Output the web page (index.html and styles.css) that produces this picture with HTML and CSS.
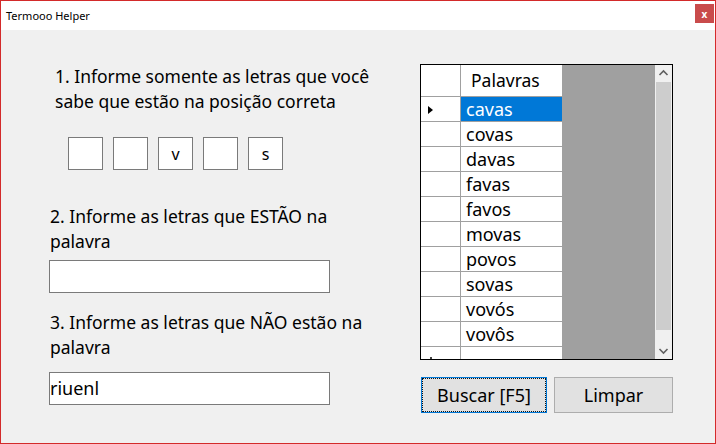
FILE: index.html
```html
<!DOCTYPE html>
<html lang="pt">
<head>
<meta charset="utf-8">
<title>Termooo Helper</title>
<link rel="stylesheet" href="styles.css">
</head>
<body>
<div class="window">
  <div class="titlebar">
    <span class="title">Termooo Helper</span>
    <span class="close">x</span>
  </div>
  <div class="content">
    <div class="left">
      <p class="label label1">1. Informe somente as letras que você<br>sabe que estão na posição correta</p>
      <div class="boxes">
        <div class="box"></div>
        <div class="box"></div>
        <div class="box">v</div>
        <div class="box"></div>
        <div class="box">s</div>
      </div>
      <p class="label label2">2. Informe as letras que ESTÃO na<br>palavra</p>
      <div class="input"></div>
      <p class="label label3">3. Informe as letras que NÃO estão na<br>palavra</p>
      <div class="input input2">riuenl</div>
    </div>
    <div class="right">
      <div class="grid">
        <div class="table">
          <div class="row head"><div class="rh"></div><div class="cell">Palavras</div></div>
          <div class="row sel"><div class="rh"><span class="arrow"></span></div><div class="cell">cavas</div></div>
          <div class="row"><div class="rh"></div><div class="cell">covas</div></div>
          <div class="row"><div class="rh"></div><div class="cell">davas</div></div>
          <div class="row"><div class="rh"></div><div class="cell">favas</div></div>
          <div class="row"><div class="rh"></div><div class="cell">favos</div></div>
          <div class="row"><div class="rh"></div><div class="cell">movas</div></div>
          <div class="row"><div class="rh"></div><div class="cell">povos</div></div>
          <div class="row"><div class="rh"></div><div class="cell">sovas</div></div>
          <div class="row"><div class="rh"></div><div class="cell">vovós</div></div>
          <div class="row"><div class="rh"></div><div class="cell">vovôs</div></div>
          <div class="row newrow"><div class="rh"><span class="dot"></span></div><div class="cell"></div></div>
        </div>
        <div class="fill"></div>
        <div class="scroll">
          <svg class="chev" width="17" height="17" viewBox="0 0 17 17"><path d="M4.5 10 L8.5 6 L12.5 10" fill="none" stroke="#606060" stroke-width="1.6"/></svg>
          <div class="track"><div class="thumb"></div></div>
          <svg class="chev" width="17" height="17" viewBox="0 0 17 17"><path d="M4.5 7 L8.5 11 L12.5 7" fill="none" stroke="#606060" stroke-width="1.6"/></svg>
        </div>
      </div>
      <div class="buttons">
        <button class="btn btn-primary">Buscar [F5]</button>
        <button class="btn btn-clear">Limpar</button>
      </div>
    </div>
  </div>
</div>
</body>
</html>
```

FILE: styles.css
```css
* { box-sizing: border-box; }
html, body { margin: 0; padding: 0; }
body {
  width: 716px;
  height: 444px;
  overflow: hidden;
  font-family: "Noto Sans", "Open Sans", sans-serif;
  color: #000;
}
.window {
  width: 716px;
  height: 444px;
  border: 1px solid #d32a2a;
  background: #f0f0f0;
  display: flex;
  flex-direction: column;
}
.titlebar {
  height: 29px;
  background: #fff;
  display: flex;
  align-items: center;
  justify-content: space-between;
  padding-left: 5px;
  padding-right: 1px;
}
.title {
  font-size: 11px;
  color: #000;
}
.close {
  width: 19px;
  height: 19px;
  margin-top: -4px;
  background: #c94b4b;
  color: #fff;
  font-size: 10px;
  font-weight: bold;
  display: flex;
  align-items: center;
  justify-content: center;
  line-height: 1;
}
.content {
  display: flex;
  flex: 1;
}
.left {
  width: 419px;
  padding-left: 48px;
  padding-top: 34px;
}
.label {
  margin: 0;
  font-size: 17.5px;
  line-height: 25px;
}
.label1 { margin-left: 6px; }
.boxes {
  display: flex;
  gap: 10px;
  margin-top: 23px;
  margin-left: 19px;
}
.box {
  width: 35px;
  height: 33px;
  border: 1px solid #7a7a7a;
  background: #fff;
  font-size: 16px;
  display: flex;
  align-items: center;
  justify-content: center;
}
.label2 { margin-top: 34px; margin-left: 1px; }
.input {
  width: 281px;
  height: 33px;
  border: 1px solid #7a7a7a;
  background: #fff;
  margin-top: 6px;
  font-size: 18px;
  line-height: 31px;
  padding-left: 0;
}
.label3 { margin-top: 17px; margin-left: 1px; }
.input2 { margin-top: 12px; }
.right {
  padding-top: 34px;
  width: 253px;
}
.grid {
  width: 253px;
  height: 296px;
  border: 1px solid #000;
  display: flex;
  overflow: hidden;
}
.table {
  width: 141px;
  background: #fff;
  display: flex;
  flex-direction: column;
}
.row {
  display: flex;
  height: 25px;
  border-bottom: 1px solid #a0a0a0;
  flex-shrink: 0;
}
.row.head { height: 32px; }
.rh {
  width: 40px;
  border-right: 1px solid #a0a0a0;
  position: relative;
}
.cell {
  flex: 1;
  font-size: 18px;
  line-height: 24px;
  padding-left: 5px;
}
.head .cell {
  font-size: 17.5px;
  padding-left: 10px;
  line-height: 31px;
}
.sel .cell {
  background: #0078d7;
  color: #fff;
}
.arrow {
  position: absolute;
  left: 7px;
  top: 9px;
  width: 0;
  height: 0;
  border-top: 4px solid transparent;
  border-bottom: 4px solid transparent;
  border-left: 5px solid #000;
}
.newrow { border-bottom: none; }
.dot {
  position: absolute;
  left: 9px;
  top: 10px;
  width: 2px;
  height: 2px;
  background: #444;
}
.fill {
  width: 93px;
  background: #a0a0a0;
}
.scroll {
  width: 17px;
  background: #f0f0f0;
  display: flex;
  flex-direction: column;
}
.chev { display: block; flex-shrink: 0; }
.track {
  flex: 1;
  padding: 0 1px;
}
.thumb {
  height: 248px;
  background: #cdcdcd;
  margin-top: 0;
}
.buttons {
  display: flex;
  gap: 7px;
  margin-top: 17px;
  padding-left: 1px;
}
.btn {
  height: 36px;
  background: #e1e1e1;
  border: 1px solid #adadad;
  font-family: "Noto Sans", "Open Sans", sans-serif;
  font-size: 18px;
  color: #000;
  padding: 0;
  margin: 0;
}
.btn-primary {
  width: 126px;
  border: 1px solid #0078d7;
  outline: 1px dotted #111;
  outline-offset: -2px;
}
.btn-clear { width: 119px; }
```
